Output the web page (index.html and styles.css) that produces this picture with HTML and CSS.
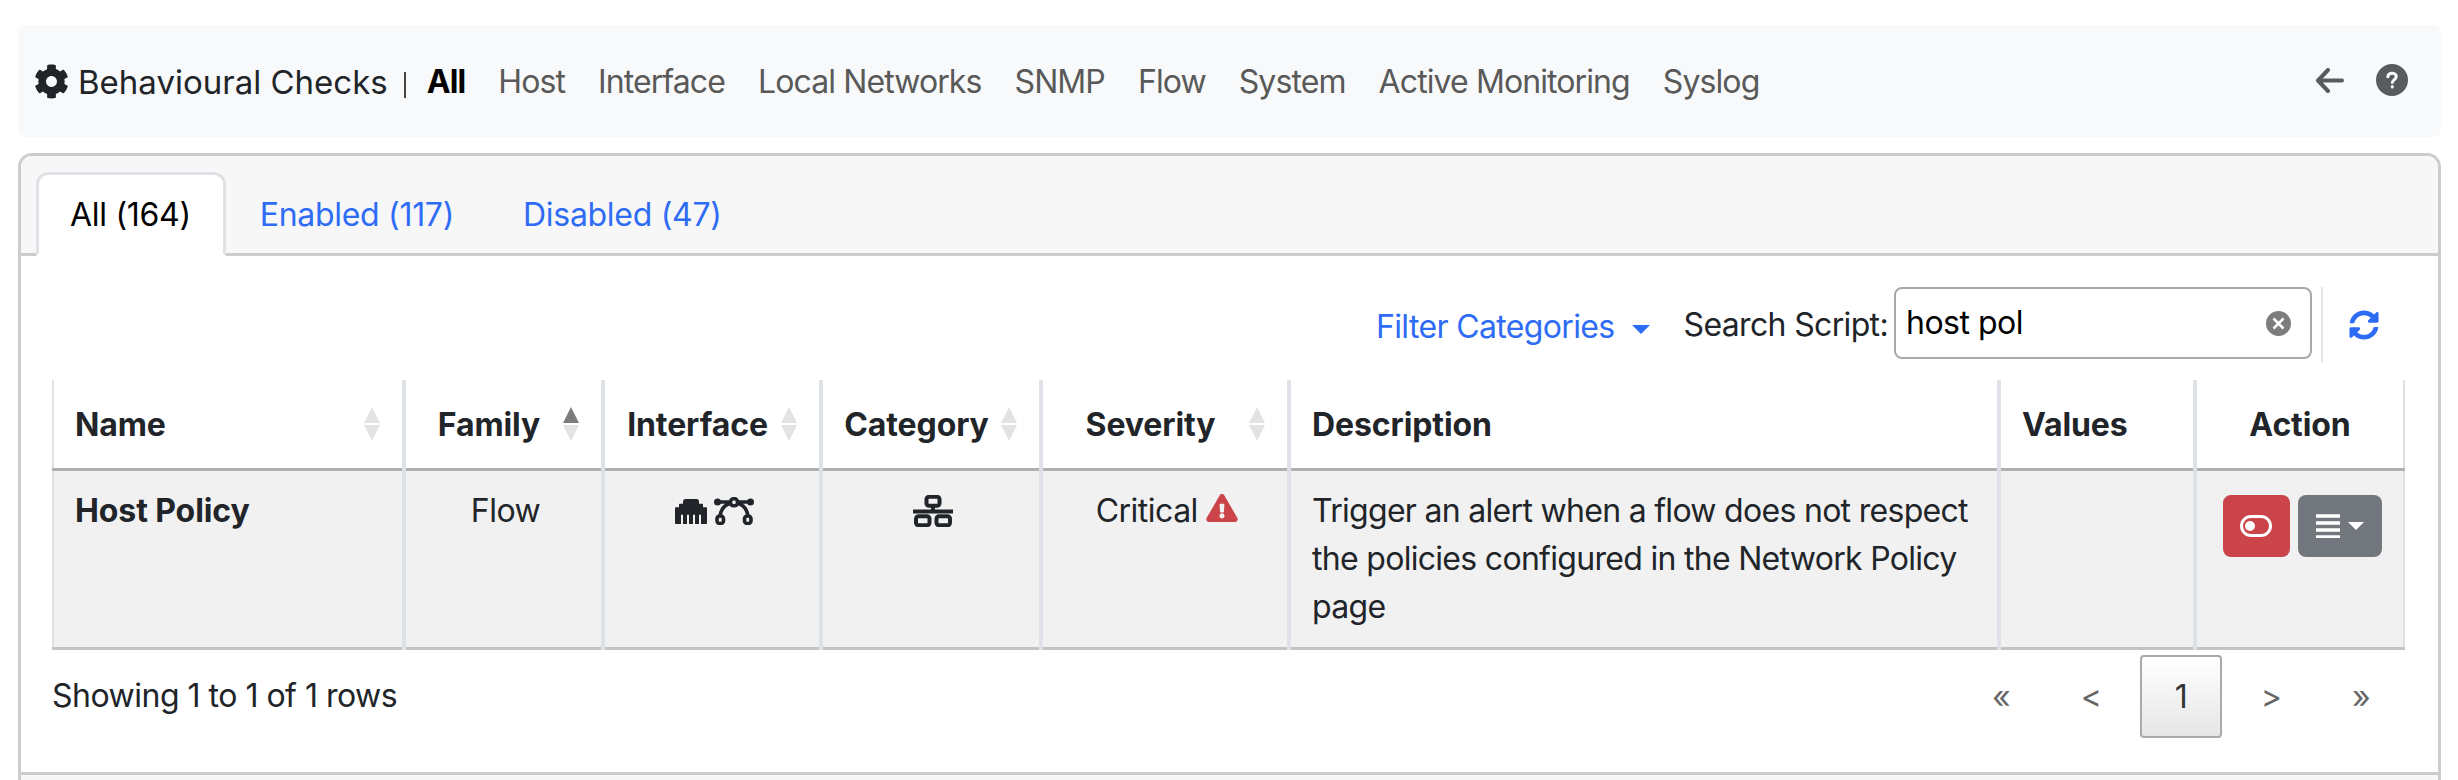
FILE: index.html
```html
<!DOCTYPE html>
<html lang="en">
  <head>
    <meta charset="UTF-8" />
    <title>Behavioural Checks</title>
    <link rel="stylesheet" href="styles.css">
  </head>
  <body>
    <!-- Top navbar -->
    <nav class="navbar">
      <svg class="icon-gear" viewBox="0 0 512 512"><path d="M487.4 315.7l-42.6-24.6c4.3-23.2 4.3-47 0-70.2l42.6-24.6c4.9-2.8 7.1-8.6 5.5-14-11.1-35.6-30-67.8-54.7-94.6-3.8-4.1-10-5.1-14.8-2.3L380.8 110c-17.9-15.4-38.5-27.3-60.8-35.1V25.8c0-5.6-3.9-10.5-9.4-11.7-36.7-8.2-74.3-7.8-109.2 0-5.5 1.2-9.4 6.1-9.4 11.7V75c-22.2 7.9-42.8 19.8-60.8 35.1L88.7 85.5c-4.9-2.8-11-1.9-14.8 2.3-24.7 26.7-43.6 58.9-54.7 94.6-1.7 5.4.6 11.2 5.5 14L67.3 221c-4.3 23.2-4.3 47 0 70.2l-42.6 24.6c-4.9 2.8-7.1 8.6-5.5 14 11.1 35.6 30 67.8 54.7 94.6 3.8 4.1 10 5.1 14.8 2.3l42.6-24.6c17.9 15.4 38.5 27.3 60.8 35.1v49.2c0 5.6 3.9 10.5 9.4 11.7 36.7 8.2 74.3 7.8 109.2 0 5.5-1.2 9.4-6.1 9.4-11.7v-49.2c22.2-7.9 42.8-19.8 60.8-35.1l42.6 24.6c4.9 2.8 11 1.9 14.8-2.3 24.7-26.7 43.6-58.9 54.7-94.6 1.5-5.5-.7-11.3-5.6-14.1zM256 336c-44.1 0-80-35.9-80-80s35.9-80 80-80 80 35.9 80 80-35.9 80-80 80z"/></svg>
      <span class="brand">Behavioural Checks</span>
      <span class="divider"></span>
      <a class="nav-link active">All</a>
      <a class="nav-link">Host</a>
      <a class="nav-link">Interface</a>
      <a class="nav-link">Local Networks</a>
      <a class="nav-link">SNMP</a>
      <a class="nav-link">Flow</a>
      <a class="nav-link">System</a>
      <a class="nav-link">Active Monitoring</a>
      <a class="nav-link">Syslog</a>
      <div class="nav-right">
        <svg class="icon-back" viewBox="0 0 29 25"><path d="M13 2L3 12.5 13 23M3.5 12.5H27"/></svg>
        <svg class="icon-help" viewBox="0 0 32 32">
          <circle cx="16" cy="16" r="16"/>
          <path class="mark" d="M11.8 12.8c.3-2.4 2-3.6 4.3-3.6s4.2 1.3 4.2 3.4c0 3-3.8 3-3.9 5.9M16.3 22.6v.4"/>
        </svg>
      </div>
    </nav>

    <!-- Main card -->
    <div class="card">
      <div class="card-header">
        <a class="tab active">All (164)</a>
        <a class="tab">Enabled (117)</a>
        <a class="tab">Disabled (47)</a>
      </div>
      <div class="card-body">
        <div class="toolbar">
          <a class="filter-link">Filter Categories<span class="caret"></span></a>
          <label class="search-label">Search Script:</label>
          <div class="search-box">
            <span class="search-text">host pol</span>
            <span class="search-clear">
              <svg viewBox="0 0 10 10"><path d="M3 3l4 4M7 3l-4 4"/></svg>
            </span>
          </div>
          <div class="refresh">
            <svg viewBox="0 0 512 512"><path d="M370.72 133.28C339.458 104.008 298.888 87.962 255.848 88c-77.458.068-144.328 53.178-162.791 126.85-1.344 5.363-6.122 9.15-11.651 9.15H24.103c-7.498 0-13.194-6.807-11.807-14.176C33.933 94.924 134.813 8 256 8c66.448 0 126.791 26.136 171.315 68.685L463.03 40.97C478.149 25.851 504 36.559 504 57.941V192c0 13.255-10.745 24-24 24H345.941c-21.382 0-32.09-25.851-16.971-40.971l41.75-41.749zM32 296h134.059c21.382 0 32.09 25.851 16.971 40.971l-41.75 41.75c31.262 29.273 71.835 45.319 114.876 45.28 77.418-.07 144.315-53.144 162.787-126.849 1.344-5.363 6.122-9.15 11.651-9.15h57.304c7.498 0 13.194 6.807 11.807 14.176C478.067 417.076 377.187 504 256 504c-66.448 0-126.791-26.136-171.315-68.685L48.97 471.03C33.851 486.149 8 475.441 8 454.059V320c0-13.255 10.745-24 24-24z"/></svg>
          </div>
        </div>

        <table class="checks">
          <colgroup>
            <col class="col-name" />
            <col class="col-family" />
            <col class="col-interface" />
            <col class="col-category" />
            <col class="col-severity" />
            <col class="col-description" />
            <col class="col-values" />
            <col class="col-action" />
          </colgroup>
          <thead>
            <tr>
              <th class="has-sort">Name<span class="sort"><i class="up"></i><i class="down"></i></span></th>
              <th class="center has-sort">Family<span class="sort"><i class="up on"></i><i class="down"></i></span></th>
              <th class="center has-sort">Interface<span class="sort"><i class="up"></i><i class="down"></i></span></th>
              <th class="center has-sort">Category<span class="sort"><i class="up"></i><i class="down"></i></span></th>
              <th class="center has-sort">Severity<span class="sort"><i class="up"></i><i class="down"></i></span></th>
              <th>Description</th>
              <th>Values</th>
              <th class="center">Action</th>
            </tr>
          </thead>
          <tbody>
            <tr>
              <td class="bold">Host Policy</td>
              <td class="center">Flow</td>
              <td class="center">
                <div class="icon-row">
                  <svg class="icon-ethernet" viewBox="0 0 512 400"><path d="M496 130h-48V92c0-8.8-7.2-16-16-16h-48V40c0-22-18-40-40-40H168c-22 0-40 18-40 40v36H80c-8.800 0-16 7.200-16 16v38H16c-8.800 0-16 7.200-16 16v238c0 8.800 7.200 16 16 16h80V250h32v150h64V250h32v150h64V250h32v150h64V250h32v150h80c8.800 0 16-7.200 16-16V146c0-8.800-7.200-16-16-16z"/></svg>
                  <svg class="icon-bezier" viewBox="0 0 40 28"><path class="line" d="M5 5h30M17 6C10 8 6.500 13 6 20M23 6c7 2 10.500 7 11 14"/><circle cx="3.500" cy="5" r="3.500"/><circle cx="36.500" cy="5" r="3.500"/><rect class="hole" x="16.500" y="1.800" width="7" height="7" rx="3"/><rect class="hole" x="3" y="19" width="6.500" height="7.500" rx="2.800"/><rect class="hole" x="30.500" y="19" width="6.500" height="7.500" rx="2.800"/></svg>
                </div>
              </td>
              <td class="center">
                <svg class="icon-net" viewBox="0 0 40 32"><rect x="13.500" y="1.800" width="13" height="9" rx="2.500"/><path d="M20 11v6M0 16.500h40"/><rect x="3" y="21.200" width="13.500" height="9" rx="2.500"/><rect x="23.500" y="21.200" width="13.500" height="9" rx="2.500"/></svg>
              </td>
              <td class="center">Critical
                <svg class="icon-warn" viewBox="0 0 576 512"><path d="M569.517 440.013C587.975 472.007 564.806 512 527.94 512H48.054c-36.937 0-59.999-40.055-41.577-71.987L246.423 23.985c18.467-32.009 64.72-31.951 83.154 0l239.94 416.028zM288 354c-25.405 0-46 20.595-46 46s20.595 46 46 46 46-20.595 46-46-20.595-46-46-46zm-43.673-165.346l7.418 136c.347 6.364 5.609 11.346 11.982 11.346h48.546c6.373 0 11.635-4.982 11.982-11.346l7.418-136c.375-6.874-5.098-12.654-11.982-12.654h-63.383c-6.884 0-12.356 5.78-11.981 12.654z"/></svg>
              </td>
              <td class="description">Trigger an alert when a flow does not respect the policies configured in the Network Policy page</td>
              <td></td>
              <td class="center">
                <div class="actions">
                  <button class="btn btn-red">
                    <svg class="icon-toggle" viewBox="0 0 32 22"><rect x="1.500" y="1.500" width="29" height="19" rx="9.500"/><circle cx="10" cy="11" r="5"/></svg>
                  </button>
                  <button class="btn btn-grey">
                    <svg class="icon-lines" viewBox="0 0 24 24"><path d="M0 2h24M0 9h24M0 16h24M0 23h24"/></svg>
                    <span class="caret caret-white"></span>
                  </button>
                </div>
              </td>
            </tr>
          </tbody>
        </table>

        <div class="table-footer">
          <span>Showing 1 to 1 of 1 rows</span>
          <div class="pager">
            <a class="page">«</a>
            <a class="page">&lt;</a>
            <a class="page current">1</a>
            <a class="page">&gt;</a>
            <a class="page">»</a>
          </div>
        </div>
      </div>
      <div class="card-footer"></div>
    </div>
  </body>
</html>
```

FILE: styles.css
```css
/* Page */
html {
  height: 780px;
  overflow: hidden;
}

body {
  margin: 0;
  padding: 25px 17px 0 18px;
  font-family: Inter, "Liberation Sans", sans-serif;
  font-size: 32px;
  line-height: 48px;
  letter-spacing: -0.5px;
  color: #212529;
  background-color: #fff;
}

/* Navbar */
.navbar {
  display: flex;
  align-items: center;
  height: 112px;
  padding: 2px 33px 0 16px;
  background-color: #f8f9fa;
  border-radius: 8px;
  box-sizing: border-box;
}

.icon-gear {
  width: 35px;
  height: 35px;
  margin: -2px 9px 0 0;
  fill: #212529;
}

.brand {
  font-size: 33px;
  letter-spacing: 0;
}

.divider {
  width: 2px;
  height: 26px;
  margin: 6px 21px 0 16px;
  background-color: #444;
}

.nav-link {
  margin-right: 33px;
  letter-spacing: -0.9px;
  color: #595959;
}

.nav-link.active {
  color: #000;
  font-weight: 700;
}

.nav-right {
  display: flex;
  align-items: center;
  gap: 32px;
  margin: -4px 0 0 auto;
}

.icon-back {
  width: 29px;
  height: 25px;
  fill: none;
  stroke: #595c5f;
  stroke-width: 4;
  stroke-linecap: round;
  stroke-linejoin: round;
}

.icon-help {
  width: 32px;
  height: 32px;
  fill: #595c5f;
}

.icon-help .mark {
  fill: none;
  stroke: #f8f9fa;
  stroke-width: 3;
  stroke-linecap: round;
}

/* Card */
.card {
  margin-top: 16px;
  border: 3px solid #ccc;
  border-bottom: 0;
  border-radius: 14px 14px 0 0;
}

.card-header {
  display: flex;
  height: 100px;
  padding: 16px 0 0 15px;
  background-color: #f7f7f7;
  border-bottom: 3px solid #ccc;
  border-radius: 11px 11px 0 0;
  box-sizing: border-box;
}

.tab {
  height: 84px;
  padding: 0 32px 0 31px;
  line-height: 80px;
  letter-spacing: -0.3px;
  color: #2f6cf5;
  border: 3px solid transparent;
  border-radius: 12px 12px 0 0;
  box-sizing: border-box;
}

.tab.active {
  color: #000;
  background-color: #fff;
  border-color: #dee2e6 #dee2e6 #fff;
}

.card-body {
  padding: 31px 33px 0 31px;
}

/* Toolbar */
.toolbar {
  display: flex;
  align-items: center;
  justify-content: flex-end;
  height: 75px;
  margin-bottom: 18px;
}

.filter-link {
  margin-top: 4px;
  letter-spacing: -0.65px;
  color: #2f6cf5;
}

.caret {
  display: inline-block;
  margin-left: 17px;
  vertical-align: 4px;
  border-top: 9px solid currentColor;
  border-left: 9px solid transparent;
  border-right: 9px solid transparent;
}

.search-label {
  margin: 0 6px 0 34px;
  letter-spacing: -0.65px;
}

.search-box {
  display: flex;
  align-items: center;
  justify-content: space-between;
  width: 418px;
  height: 72px;
  padding: 0 19px 0 10px;
  margin-bottom: 3px;
  border: 2px solid #a9a9a9;
  border-radius: 8px;
  box-sizing: border-box;
}

.search-text {
  color: #000;
}

.search-clear {
  display: flex;
  width: 25px;
  height: 25px;
  background-color: #7d7d7d;
  border-radius: 50%;
}

.search-clear svg {
  fill: none;
  stroke: #fff;
  stroke-width: 1;
}

.refresh {
  display: flex;
  align-items: center;
  height: 75px;
  margin-left: 9px;
  padding: 0 26px 0 26px;
  border-left: 2px solid #e4e4e4;
}

.refresh svg {
  width: 30px;
  height: 30px;
  fill: #2f6cf5;
}

/* Table */
.checks {
  width: 2351px;
  border-collapse: collapse;
  table-layout: fixed;
}

.col-name { width: 351px; }
.col-family { width: 199px; }
.col-interface { width: 218px; }
.col-category { width: 220px; }
.col-severity { width: 248px; }
.col-description { width: 710px; }
.col-values { width: 196px; }
.col-action { width: 209px; }

.checks th,
.checks td {
  padding: 16px 21px;
  text-align: left;
  vertical-align: top;
  border-left: 4px solid #dee2e6;
  border-right: 4px solid #dee2e6;
}

.checks th {
  position: relative;
  height: 88px;
  padding-top: 21px;
  padding-bottom: 19px;
  font-weight: 700;
  letter-spacing: -0.1px;
  border-bottom: 3px solid #b0b0b0;
  box-sizing: border-box;
}

.checks th:first-child,
.checks td:first-child {
  border-left-width: 2px;
}

.checks th:last-child,
.checks td:last-child {
  border-right-width: 2px;
}

.checks td {
  background-color: #f1f1f1;
  border-bottom: 3px solid #c4c4c4;
}

.checks .center {
  text-align: center;
}

.checks td.center {
  padding-left: 24px;
  padding-right: 20px;
}

.checks .has-sort.center {
  padding-left: 0;
  padding-right: 29px;
  white-space: nowrap;
}

.checks .bold {
  font-weight: 700;
  letter-spacing: -0.1px;
}

.checks .description {
  padding-right: 8px;
  letter-spacing: -0.7px;
}

/* Sort arrows sit over the right side of the header cell */
.sort {
  position: absolute;
  top: 27px;
  right: 22px;
  display: flex;
  flex-direction: column;
  gap: 2px;
}

.sort i {
  display: block;
  border-left: 8px solid transparent;
  border-right: 8px solid transparent;
}

.sort .up {
  border-bottom: 16px solid #e2e3e3;
}

.sort .up.on {
  border-bottom-color: #7c7d7e;
}

.sort .down {
  border-top: 16px solid #e2e3e3;
}

/* Row icons */
.icon-row {
  display: flex;
  justify-content: center;
  align-items: center;
  gap: 7px;
  margin-top: 10px;
}

.icon-ethernet {
  width: 32px;
  height: 25px;
  fill: #212529;
}

.icon-bezier {
  width: 40px;
  height: 28px;
  fill: #212529;
}

.icon-bezier .line {
  fill: none;
  stroke: #212529;
  stroke-width: 3.600;
}

.icon-bezier .hole {
  fill: #f1f1f1;
  stroke: #212529;
  stroke-width: 3.600;
}

.icon-net {
  display: block;
  width: 40px;
  height: 32px;
  margin: 8px auto 0;
  fill: none;
  stroke: #212529;
  stroke-width: 4;
}

.icon-warn {
  width: 32px;
  height: 28px;
  fill: #cb444a;
  vertical-align: 0;
}

/* Action buttons */
.actions {
  display: flex;
  justify-content: center;
  gap: 8px;
  margin-top: 8px;
}

.btn {
  display: flex;
  align-items: center;
  justify-content: center;
  height: 62px;
  padding: 0;
  border: none;
  border-radius: 8px;
}

.btn-red {
  width: 67px;
  background-color: #cb444a;
}

.btn-grey {
  width: 84px;
  background-color: #72777e;
}

.icon-toggle {
  width: 32px;
  height: 22px;
  fill: #fff;
}

.icon-toggle rect {
  fill: none;
  stroke: #fff;
  stroke-width: 3;
}

.icon-lines {
  width: 24px;
  height: 24px;
  fill: none;
  stroke: #fff;
  stroke-width: 3.400;
}

.caret-white {
  margin-left: 8px;
  vertical-align: 0;
  color: #fff;
  border-top-width: 8px;
  border-left-width: 8px;
  border-right-width: 8px;
}

/* Footer of the table */
.table-footer {
  display: flex;
  align-items: center;
  justify-content: space-between;
  height: 122px;
  padding-bottom: 30px;
  box-sizing: border-box;
}

.pager {
  display: flex;
  align-items: center;
  gap: 8px;
  margin-right: 3px;
}

.page {
  width: 82px;
  height: 83px;
  line-height: 79px;
  text-align: center;
  color: #666;
  border: 2px solid transparent;
  border-radius: 4px;
  box-sizing: border-box;
}

.page.current {
  color: #333;
  background: linear-gradient(#fff, #e6e6e6);
  border-color: #aaa;
}

.card-footer {
  height: 8px;
  background-color: #f7f7f7;
  border-top: 3px solid #ccc;
  box-sizing: border-box;
}
```
